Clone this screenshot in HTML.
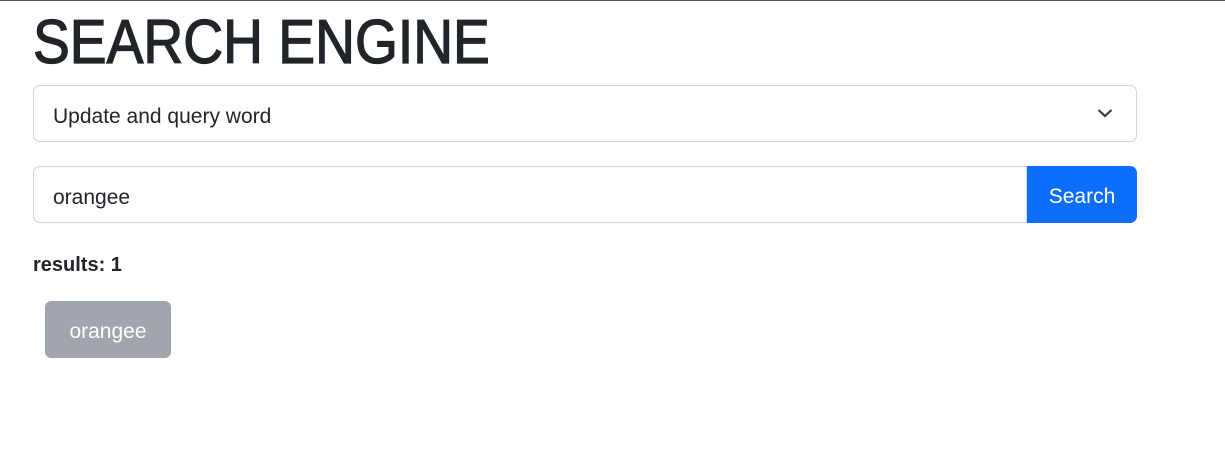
<!DOCTYPE html>
<html><head><style>
body{margin:0;width:1225px;height:454px;background:#fff;font-family:"Liberation Sans",sans-serif;color:#212529;border-top:1px solid #555;box-sizing:border-box;position:relative;overflow:hidden}
.h{position:absolute;left:33px;top:4px;font-size:62px;line-height:76px;font-weight:normal;-webkit-text-stroke:1.3px #212529;white-space:nowrap;transform:scaleX(0.89);transform-origin:left top}
.box{position:absolute;left:33px;width:1102px;height:55px;border:1px solid #ced4da;border-radius:7px;font-size:21px;line-height:55px;box-sizing:content-box}
.sel{top:84px}
.sel span{position:absolute;left:19px;top:3px}
.inp{top:165px;width:992px;border-radius:7px 0 0 7px}
.inp span{position:absolute;left:19px;top:3px}
.btn{position:absolute;left:1027px;top:165px;width:110px;height:57px;background:#0d6efd;color:#fff;border-radius:0 7px 7px 0;font-size:21px;line-height:61px;text-align:center}
.res{position:absolute;left:33px;top:251px;font-size:20px;font-weight:bold;line-height:26px}
.badge{position:absolute;left:45px;top:300px;width:126px;height:57px;background:#a1a6ad;color:#fff;border-radius:6px;font-size:21px;line-height:61px;text-align:center}
</style></head><body>
<div class="h">SEARCH ENGINE</div>
<div class="box sel"><span>Update and query word</span>
<svg style="position:absolute;left:1063px;top:20px" width="16" height="14" viewBox="0 0 16 14"><path d="M1.5 4 L8 10 L14.5 4" fill="none" stroke="#343a40" stroke-width="2.2"/></svg></div>
<div class="box inp"><span>orangee</span></div>
<div class="btn">Search</div>
<div class="res">results: 1</div>
<div class="badge">orangee</div>
</body></html>
